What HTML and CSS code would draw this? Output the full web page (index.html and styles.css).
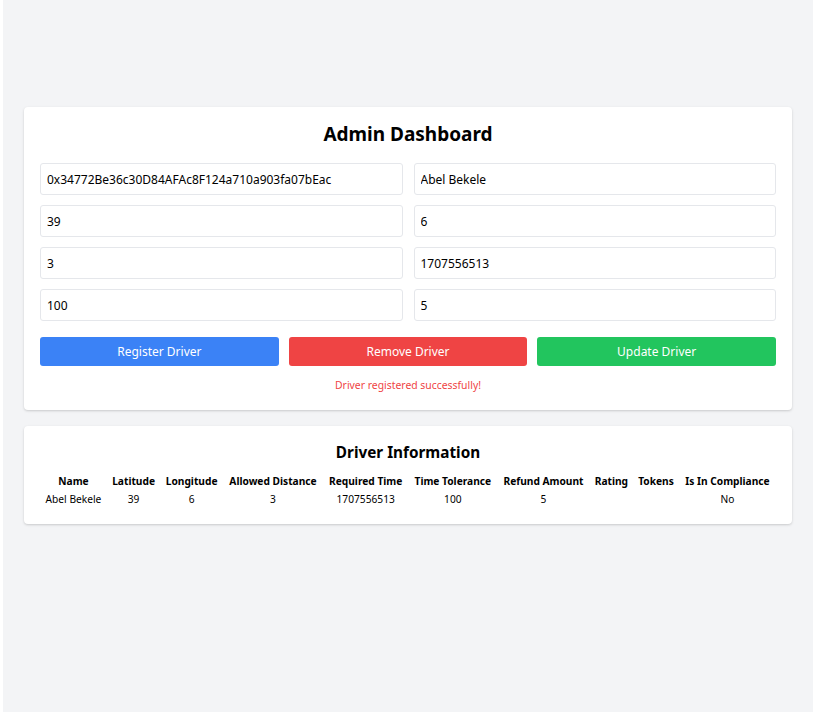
FILE: index.html
```html
<!DOCTYPE html>
<html>
<head>
<meta charset="utf-8">
<link rel="stylesheet" href="styles.css">
</head>
<body>
<div class="page">
  <div class="card">
    <h1 class="title">Admin Dashboard</h1>
    <div class="grid">
      <input class="field" value="0x34772Be36c30D84AFAc8F124a710a903fa07bEac">
      <input class="field" value="Abel Bekele">
      <input class="field" value="39">
      <input class="field" value="6">
      <input class="field" value="3">
      <input class="field" value="1707556513">
      <input class="field" value="100">
      <input class="field" value="5">
    </div>
    <div class="buttons">
      <button class="btn blue">Register Driver</button>
      <button class="btn red">Remove Driver</button>
      <button class="btn green">Update Driver</button>
    </div>
    <p class="msg">Driver registered successfully!</p>
  </div>
  <div class="card card2">
    <h2 class="title2">Driver Information</h2>
    <table class="tbl">
      <thead>
        <tr>
          <th>Name</th><th>Latitude</th><th>Longitude</th><th>Allowed Distance</th><th>Required Time</th><th>Time Tolerance</th><th>Refund Amount</th><th>Rating</th><th>Tokens</th><th>Is In Compliance</th>
        </tr>
      </thead>
      <tbody>
        <tr>
          <td>Abel Bekele</td><td>39</td><td>6</td><td>3</td><td>1707556513</td><td>100</td><td>5</td><td></td><td></td><td>No</td>
        </tr>
      </tbody>
    </table>
  </div>
</div>
</body>
</html>
```

FILE: styles.css
```css
html, body {
  margin: 0;
  padding: 0;
  background: #ffffff;
}
body {
  font-family: "Noto Sans", "Open Sans", sans-serif;
  color: #000;
}
.page {
  margin-left: 3px;
  width: 810px;
  min-height: 712px;
  background: #f3f4f6;
  padding-top: 107px;
  box-sizing: border-box;
}
.card {
  width: 768px;
  margin: 0 auto;
  background: #fff;
  border-radius: 4px;
  box-shadow: 0 1px 3px rgba(0,0,0,0.12), 0 1px 2px rgba(0,0,0,0.06);
  padding: 16px;
  box-sizing: border-box;
}
.title {
  margin: 0 0 18px;
  text-align: center;
  font-size: 19px;
  line-height: 22px;
  font-weight: 700;
}
.grid {
  display: grid;
  grid-template-columns: 1fr 1fr;
  gap: 10px 11px;
}
.field {
  height: 32px;
  box-sizing: border-box;
  border: 1px solid #e5e7eb;
  border-radius: 3px;
  padding: 0 6px;
  font-family: inherit;
  font-size: 12px;
  color: #000;
  outline: none;
}
.buttons {
  display: grid;
  grid-template-columns: 1fr 1fr 1fr;
  gap: 10px;
  margin-top: 16px;
}
.btn {
  height: 29px;
  border: none;
  border-radius: 3px;
  color: #fff;
  font-family: inherit;
  font-size: 12px;
  cursor: pointer;
}
.blue { background: #3b82f6; }
.red { background: #ef4444; }
.green { background: #22c55e; }
.msg {
  margin: 11px 0 0;
  text-align: center;
  color: #ef4444;
  font-size: 10.4px;
  line-height: 17px;
}
.card2 {
  margin-top: 16px;
}
.title2 {
  margin: 0 0 10px;
  text-align: center;
  font-size: 15.3px;
  line-height: 20px;
  font-weight: 700;
}
.tbl {
  width: 100%;
  border-collapse: collapse;
  font-size: 10.2px;
}
.tbl th {
  font-weight: 700;
  padding: 0 4px;
  line-height: 18px;
  white-space: nowrap;
}
.tbl td {
  text-align: center;
  padding: 0 4px;
  line-height: 18px;
  white-space: nowrap;
}
```
